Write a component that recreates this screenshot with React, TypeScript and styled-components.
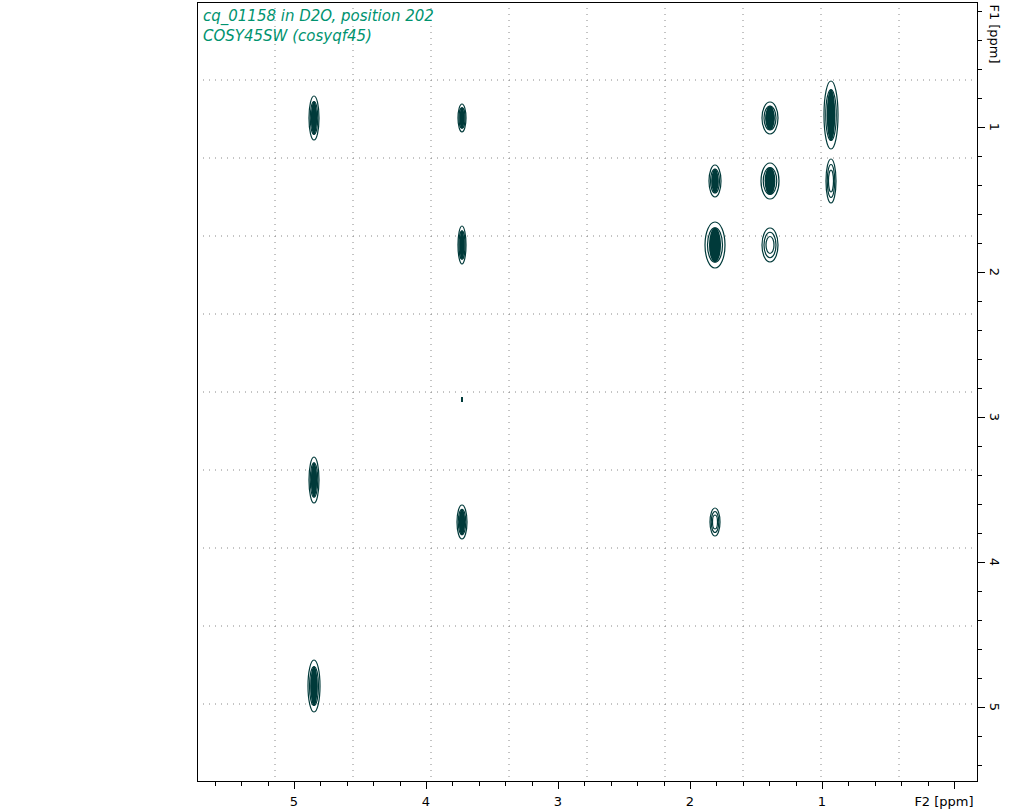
import React from "react";
import styled, { createGlobalStyle } from "styled-components";

const Global = createGlobalStyle`
  html, body { margin: 0; padding: 0; background: #fff; overflow: hidden; }
`;

const Page = styled.div`
  width: 1027px;
  height: 811px;
  position: relative;
  background: #fff;
`;

const Title = styled.div`
  position: absolute;
  left: 203px;
  top: 6px;
  font-family: "DejaVu Sans", sans-serif;
  font-style: italic;
  font-size: 15px;
  line-height: 20px;
  color: #00936f;
`;

const Chart = styled.svg`
  display: block;
  font-family: "DejaVu Sans", sans-serif;
`;

const L = 197, R = 977, T = 2, B = 781;
const xOf = (p: number) => 822 - (p - 1) * 132;
const yOf = (p: number) => 127 + (p - 1) * 145;
const INK = "#003a3a";

type Peak = { x: number; y: number; w: number; h: number; fill?: boolean };
const peaks: Peak[] = [
  { x: 314, y: 118, w: 10, h: 44, fill: true },
  { x: 462, y: 118, w: 8, h: 28, fill: true },
  { x: 770, y: 118, w: 16, h: 32, fill: true },
  { x: 831, y: 115, w: 14, h: 68, fill: true },
  { x: 715, y: 181, w: 12, h: 32, fill: true },
  { x: 770, y: 181, w: 18, h: 36, fill: true },
  { x: 831, y: 181, w: 10, h: 44 },
  { x: 462, y: 245, w: 8, h: 38, fill: true },
  { x: 715, y: 245, w: 20, h: 46, fill: true },
  { x: 770, y: 245, w: 16, h: 34 },
  { x: 314, y: 480, w: 10, h: 46, fill: true },
  { x: 462, y: 522, w: 10, h: 34, fill: true },
  { x: 715, y: 522, w: 10, h: 28 },
  { x: 314, y: 686, w: 12, h: 52, fill: true },
];

function PeakShape({ p }: { p: Peak }) {
  const rings = [1, 0.75, 0.5];
  return (
    <g>
      {rings.map((s, i) => (
        <ellipse key={i} cx={p.x} cy={p.y} rx={(p.w / 2) * s} ry={(p.h / 2) * s}
          fill="none" stroke={INK} strokeWidth={1.2} />
      ))}
      {p.fill && <ellipse cx={p.x} cy={p.y} rx={p.w * 0.3} ry={p.h * 0.38} fill={INK} />}
    </g>
  );
}

export default function App() {
  const grid: number[] = [];
  for (let k = 1; k < 10; k++) grid.push(78 * k);
  const xTicks: number[] = [];
  for (let i = -0; i <= 28; i++) xTicks.push(i * 0.2);
  const yTicks: number[] = [];
  for (let i = 1; i <= 27; i++) yTicks.push(i * 0.2);
  return (
    <Page>
      <Global />
      <Chart width={1027} height={811} viewBox="0 0 1027 811">
        {grid.map((g) => (
          <line key={"v" + g} x1={L + g} x2={L + g} y1={T} y2={B} stroke="#888" strokeWidth={1} strokeDasharray="1 5" />
        ))}
        {grid.map((g) => (
          <line key={"h" + g} x1={L} x2={R} y1={T + g} y2={T + g} stroke="#888" strokeWidth={1} strokeDasharray="1 5" />
        ))}
        <rect x={L + 0.5} y={T + 0.5} width={R - L} height={B - T} fill="none" stroke="#000" strokeWidth={1} />
        {xTicks.map((p) => {
          const x = Math.round(xOf(p)) + 0.5;
          if (x < L || x > R) return null;
          const major = Math.abs(p - Math.round(p)) < 1e-6;
          return <line key={"xt" + p} x1={x} x2={x} y1={B} y2={B + (major ? 8 : 5)} stroke="#000" />;
        })}
        {[1, 2, 3, 4, 5].map((p) => (
          <text key={"xl" + p} x={xOf(p)} y={806} textAnchor="middle" fontSize={13} fill="#000">{p}</text>
        ))}
        <text x={944} y={806} textAnchor="middle" fontSize={13} fill="#000">F2 [ppm]</text>
        {yTicks.map((p) => {
          const y = Math.round(yOf(p)) + 0.5;
          if (y < T || y > B) return null;
          const major = Math.abs(p - Math.round(p)) < 1e-6;
          return <line key={"yt" + p} x1={R} x2={R + (major ? 8 : 5)} y1={y} y2={y} stroke="#000" />;
        })}
        {[1, 2, 3, 4, 5].map((p) => (
          <text key={"yl" + p} x={0} y={0} transform={`translate(990 ${yOf(p)}) rotate(90)`} textAnchor="middle" fontSize={13} fill="#000">{p}</text>
        ))}
        <text transform="translate(990 34) rotate(90)" textAnchor="middle" fontSize={13} fill="#000">F1 [ppm]</text>
        {peaks.map((p, i) => <PeakShape key={i} p={p} />)}
        <line x1={462} x2={462} y1={397} y2={402} stroke={INK} strokeWidth={2} />
      </Chart>
      <Title>
        <div>cq_01158 in D2O, position 202</div>
        <div>COSY45SW (cosyqf45)</div>
      </Title>
    </Page>
  );
}
